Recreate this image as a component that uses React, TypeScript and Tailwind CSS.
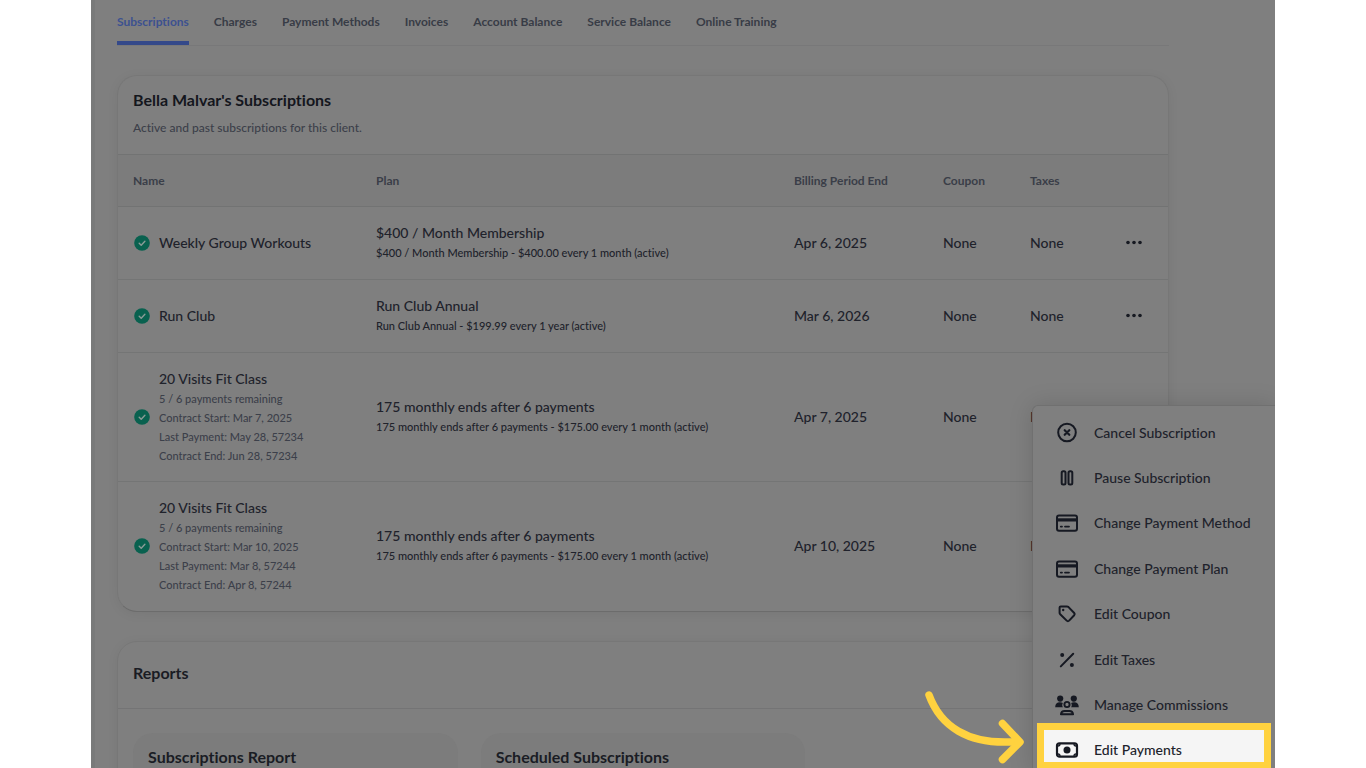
import React from "react";
import { clsx } from "clsx";

const tabs = [
  "Subscriptions",
  "Charges",
  "Payment Methods",
  "Invoices",
  "Account Balance",
  "Service Balance",
  "Online Training",
];

const subscriptions = [
  {
    name: "Weekly Group Workouts",
    details: [],
    plan: "$400 / Month Membership",
    planInfo: "$400 / Month Membership - $400.00 every 1 month (active)",
    end: "Apr 6, 2025",
  },
  {
    name: "Run Club",
    details: [],
    plan: "Run Club Annual",
    planInfo: "Run Club Annual - $199.99 every 1 year (active)",
    end: "Mar 6, 2026",
  },
  {
    name: "20 Visits Fit Class",
    details: [
      "5 / 6 payments remaining",
      "Contract Start: Mar 7, 2025",
      "Last Payment: May 28, 57234",
      "Contract End: Jun 28, 57234",
    ],
    plan: "175 monthly ends after 6 payments",
    planInfo: "175 monthly ends after 6 payments - $175.00 every 1 month (active)",
    end: "Apr 7, 2025",
  },
  {
    name: "20 Visits Fit Class",
    details: [
      "5 / 6 payments remaining",
      "Contract Start: Mar 10, 2025",
      "Last Payment: Mar 8, 57244",
      "Contract End: Apr 8, 57244",
    ],
    plan: "175 monthly ends after 6 payments",
    planInfo: "175 monthly ends after 6 payments - $175.00 every 1 month (active)",
    end: "Apr 10, 2025",
  },
];

function Icon({ children }: { children: React.ReactNode }) {
  return (
    <svg
      viewBox="0 0 24 24"
      className="w-6 h-6 shrink-0 text-[#161922]"
      fill="none"
      stroke="currentColor"
      strokeWidth="2"
      strokeLinecap="round"
      strokeLinejoin="round"
      aria-hidden="true">
      {children}
    </svg>
  );
}

const cancelIcon = (
  <Icon>
    <circle cx="12" cy="11.5" r="8.8" />
    <path d="M9.7 9.2l4.6 4.6M14.3 9.2l-4.6 4.6" strokeWidth="2.2" />
  </Icon>
);

const pauseIcon = (
  <Icon>
    <rect x="6.7" y="5.2" width="3.8" height="13.2" rx="1.5" />
    <rect x="13.5" y="5.2" width="3.8" height="13.2" rx="1.5" />
  </Icon>
);

const cardIcon = (
  <Icon>
    <rect x="2" y="4.4" width="20" height="15.4" rx="2" />
    <path d="M2 8.9h20" strokeWidth="3.2" strokeLinecap="butt" />
    <path d="M5.8 15.6h1.2M10 15.6h4" strokeWidth="1.8" />
  </Icon>
);

const tagIcon = (
  <Icon>
    <path d="M4.6 5.6a1.2 1.2 0 0 1 1.2-1.2h6.2c.5 0 .9.2 1.3.5l5.9 6.1c.6.7.6 1.6 0 2.2l-5.1 5.4c-.7.7-1.700.7-2.400 0l-6.500-6.300a1.800 1.800 0 0 1-.6-1.300z" />
    <circle cx="8.200" cy="8" r="1.200" fill="currentColor" stroke="none" />
  </Icon>
);

const percentIcon = (
  <Icon>
    <path d="M5.8 18.4L18.2 5.8" />
    <circle cx="7.2" cy="7" r="2" fill="currentColor" stroke="none" />
    <circle cx="16.9" cy="16.9" r="2" fill="currentColor" stroke="none" />
  </Icon>
);

const groupIcon = (
  <Icon>
    <g fill="currentColor" stroke="none">
      <circle cx="5.2" cy="5.6" r="3.1" />
      <circle cx="18.8" cy="5.600" r="3.100" />
      <path d="M0.2 14.200c0-3.200 1.700-5 4.700-5 1.200 0 2.200.2 3 .7-.9 1.300-.9 3 0 4.300z" />
      <path d="M23.800 14.200c0-3.200-1.700-5-4.700-5-1.200 0-2.200.2-3 .7.9 1.300.9 3 0 4.300z" />
    </g>
    <circle cx="12" cy="11.500" r="2.600" strokeWidth="1.900" />
    <path d="M6 21.300c.2-2.200 1.600-3.300 3.600-3.300h4.800c2 0 3.400 1.100 3.600 3.300z" strokeWidth="2.100" />
  </Icon>
);

const cashIcon = (
  <Icon>
    <rect x="2" y="5.300" width="20" height="13.400" rx="2.500" strokeWidth="2.200" />
    <path
      d="M3 8c1.300 0 2-.7 2-2M21 8c-1.300 0-2-.7-2-2M3 16c1.300 0 2 .7 2 2M21 16c-1.300 0-2 .7-2 2"
      strokeWidth="1.300"
    />
    <circle cx="12" cy="12" r="3.500" fill="currentColor" stroke="none" />
  </Icon>
);

const menu = [
  { label: "Cancel Subscription", icon: cancelIcon },
  { label: "Pause Subscription", icon: pauseIcon },
  { label: "Change Payment Method", icon: cardIcon },
  { label: "Change Payment Plan", icon: cardIcon },
  { label: "Edit Coupon", icon: tagIcon },
  { label: "Edit Taxes", icon: percentIcon },
  { label: "Manage Commissions", icon: groupIcon },
  { label: "Edit Payments", icon: cashIcon, highlighted: true },
];

function ActiveCheck() {
  return (
    <svg viewBox="0 0 16 16" className="w-4 h-4 shrink-0" role="img" aria-label="Active">
      <circle cx="8" cy="8" r="7.8" fill="#09614f" />
      <path
        d="M5.2 8.2l2 2 3.7-3.9"
        fill="none"
        stroke="#8a9b97"
        strokeWidth="1.4"
        strokeLinecap="round"
        strokeLinejoin="round"
      />
    </svg>
  );
}

function Tabs() {
  return (
    <nav className="flex gap-[25px] h-[46px] border-b border-[#787879]">
      {tabs.map((tab, i) => (
        <button
          key={tab}
          className={clsx(
            "h-[45px] pt-0.5 border-b-4 text-xs font-bold whitespace-nowrap",
            i === 0
              ? "border-[#34498a] text-[#3c5190] rounded-t-xs"
              : "border-transparent text-[#383c46]"
          )}>
          {tab}
        </button>
      ))}
    </nav>
  );
}

function SubscriptionsTable() {
  return (
    <table className="w-full table-fixed text-left">
      <colgroup>
        <col className="w-[243px]" />
        <col />
        <col className="w-[149px]" />
        <col className="w-[87px]" />
        <col className="w-[83px]" />
        <col className="w-[70px]" />
      </colgroup>
      <thead>
        <tr className="h-[52px] bg-[#7c7c7c] border-y border-[#727373] text-xs text-[#3a3e48]">
          <th className="px-[15px] font-bold">Name</th>
          <th className="px-[15px] font-bold">Plan</th>
          <th className="px-[15px] font-bold whitespace-nowrap">Billing Period End</th>
          <th className="px-[15px] font-bold">Coupon</th>
          <th className="px-[15px] font-bold">Taxes</th>
          <th aria-label="Actions" />
        </tr>
      </thead>
      <tbody>
        {subscriptions.map((s, i) => (
          <tr
            key={i}
            className={clsx(
              "text-sm leading-5 text-[#20222b] border-b border-[#747575] last:border-b-0",
              s.details.length ? "h-[129px]" : "h-[73px]"
            )}>
            <td className="px-4">
              <div className="flex items-center gap-[9px]">
                <ActiveCheck />
                <div className="whitespace-nowrap">
                  <p>{s.name}</p>
                  {s.details.map((line) => (
                    <p key={line} className="text-[11px] leading-[19px] text-[#3c404a]">
                      {line}
                    </p>
                  ))}
                </div>
              </div>
            </td>
            <td className="px-[15px] whitespace-nowrap">
              <p>{s.plan}</p>
              <p className="text-[11px] leading-5">{s.planInfo}</p>
            </td>
            <td className="px-[15px] whitespace-nowrap">{s.end}</td>
            <td className="px-[15px]">None</td>
            <td className="px-[15px]">None</td>
            <td>
              <button aria-label={`Actions for ${s.name}`} className="block ml-[23px] p-1">
                <svg viewBox="0 0 18 6" className="w-[18px] h-[6px]" fill="#171a22">
                  <circle cx="3" cy="2.5" r="1.8" />
                  <circle cx="9" cy="2.5" r="1.8" />
                  <circle cx="15" cy="2.5" r="1.8" />
                </svg>
              </button>
            </td>
          </tr>
        ))}
      </tbody>
    </table>
  );
}

function ActionsMenu() {
  return (
    <ul className="absolute top-[405px] right-0 w-[243px] h-[368px] pt-1 grid grid-rows-8 bg-[#7f7f7f] border-t border-l border-[#707070] rounded-tl-md shadow-[0_0_24px_rgba(0,0,0,0.14)]">
      {menu.map((item) => (
        <li key={item.label} className="relative flex">
          {item.highlighted && (
            <span className="absolute -top-[5px] left-1 right-1 h-[46px] border-7 border-[#ffd23f] bg-[#f5f5f5]" />
          )}
          <button className="relative flex w-full items-center gap-[15px] pl-[22px] text-sm text-[#20222b] whitespace-nowrap">
            {item.icon}
            {item.label}
          </button>
        </li>
      ))}
    </ul>
  );
}

function Arrow() {
  return (
    <svg
      viewBox="0 0 104 80"
      className="absolute top-[688px] right-[247px] w-[104px] h-20"
      fill="none"
      stroke="#ffd23f"
      strokeWidth="7.5"
      strokeLinecap="round"
      strokeLinejoin="round"
      aria-hidden="true">
      <path d="M5 7C16 37 43 58 94 53.5" />
      <path d="M78.5 35.5L96 54L78.5 71.5" />
    </svg>
  );
}

export default function App() {
  return (
    <div className="h-screen overflow-hidden bg-white px-[91px] font-['Lato','Open_Sans',sans-serif] font-medium [font-variant-ligatures:none]">
      <main className="relative h-full overflow-hidden bg-[#7f7f7f] border-l-4 border-[#797a7a] pl-[22px] pr-[106px]">
        <Tabs />

        <section className="mt-[29px] rounded-[20px] border border-[#777777] border-b-[#6c6c6c] overflow-hidden shadow-[0_2px_12px_rgba(0,0,0,0.06)]">
          <header className="h-[78px] px-[15px] pt-3">
            <h2 className="text-base leading-6 font-bold text-[#14161d]">
              Bella Malvar's Subscriptions
            </h2>
            <p className="mt-1.5 text-xs leading-5 text-[#3c404a]">
              Active and past subscriptions for this client.
            </p>
          </header>
          <SubscriptionsTable />
        </section>

        <section className="mt-[29px] rounded-[20px] border border-[#777777] shadow-[0_2px_12px_rgba(0,0,0,0.06)]">
          <h2 className="flex items-center h-[67px] px-[15px] pb-1 border-b border-[#747475] text-base font-bold text-[#1a1c24]">
            Reports
          </h2>
          <div className="grid grid-cols-3 gap-[23px] px-[15px] py-6">
            {["Subscriptions Report", "Scheduled Subscriptions"].map((title) => (
              <a
                key={title}
                href="#"
                className="h-32 rounded-[20px] bg-[#7c7c7c] px-[15px] py-3 text-base font-bold text-[#1a1c24]">
                {title}
              </a>
            ))}
          </div>
        </section>

        <ActionsMenu />
        <Arrow />
      </main>
    </div>
  );
}
